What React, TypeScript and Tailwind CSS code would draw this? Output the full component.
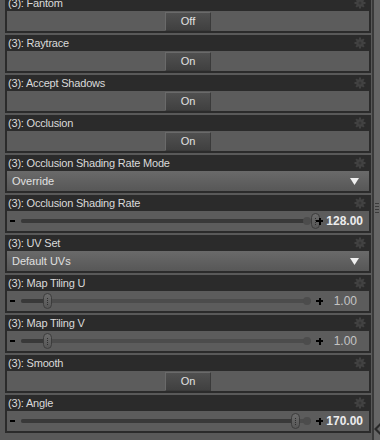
import type { ReactNode } from 'react'

type Item =
  | { label: string; kind: 'toggle'; value: string }
  | { label: string; kind: 'select'; value: string }
  | { label: string; kind: 'slider'; value: string; pos: number; bold?: boolean }

const ITEMS: Item[] = [
  { label: 'Fantom', kind: 'toggle', value: 'Off' },
  { label: 'Raytrace', kind: 'toggle', value: 'On' },
  { label: 'Accept Shadows', kind: 'toggle', value: 'On' },
  { label: 'Occlusion', kind: 'toggle', value: 'On' },
  { label: 'Occlusion Shading Rate Mode', kind: 'select', value: 'Override' },
  { label: 'Occlusion Shading Rate', kind: 'slider', value: '128.00', pos: 102, bold: true },
  { label: 'UV Set', kind: 'select', value: 'Default UVs' },
  { label: 'Map Tiling U', kind: 'slider', value: '1.00', pos: 9 },
  { label: 'Map Tiling V', kind: 'slider', value: '1.00', pos: 9 },
  { label: 'Smooth', kind: 'toggle', value: 'On' },
  { label: 'Angle', kind: 'slider', value: '170.00', pos: 95, bold: true },
]

// 小齿轮（属性菜单）
function Gear() {
  const teeth = [0, 45, 90, 135, 180, 225, 270, 315]
  return (
    <svg width="12" height="12" viewBox="0 0 12 12" className="shrink-0">
      {teeth.map((a) => (
        <rect key={a} x="5" y="0.5" width="2" height="3" fill="#424242" transform={`rotate(${a} 6 6)`} />
      ))}
      <circle cx="6" cy="6" r="3.8" fill="#424242" />
      <circle cx="6" cy="6" r="1.5" fill="#363636" />
    </svg>
  )
}

function Toggle({ value }: { value: string }) {
  return (
    <div className="h-full flex items-center justify-center">
      <div className="w-[46px] h-[19px] flex items-center justify-center bg-gradient-to-b from-[#505050] to-[#404040] border border-[#6a6a6a] border-b-[#3a3a3a] border-r-[#3a3a3a] text-[11px] text-[#e2e2e2]">
        {value}
      </div>
    </div>
  )
}

function Select({ value }: { value: string }) {
  return (
    <div className="h-full flex items-center justify-between pl-[5px] pr-[10px] bg-gradient-to-b from-[#6a6a6a] to-[#575757] text-[11px] text-[#e0e0e0]">
      <span>{value}</span>
      <svg width="9" height="7" viewBox="0 0 9 7"><path d="M0 0h9L4.5 7z" fill="#f0f0f0" /></svg>
    </div>
  )
}

function Slider({ value, pos, bold }: { value: string; pos: number; bold?: boolean }) {
  return (
    <div className="h-full flex items-center pl-[3px]">
      <div className="w-[5px] h-[2px] bg-black mr-[6px]" />
      <div className="relative flex-1 h-[4px] mr-[7px]">
        <div className="absolute inset-0 rounded-full bg-[#4c4c4c]" />
        <div className="absolute left-0 top-0 h-full rounded-full bg-[#393939]" style={{ width: `${Math.min(pos, 100)}%` }} />
        <div className="absolute right-[-2px] top-[-2px] w-[8px] h-[8px] rounded-full bg-[#4c4c4c]" />
        <div
          className="absolute top-[-6px] w-[9px] h-[16px] -ml-[4px] rounded-full bg-gradient-to-b from-[#6c6c6c] to-[#565656] border border-[#3c3c3c] flex items-center justify-center"
          style={{ left: `${pos}%` }}
        >
          <div className="w-[1px] h-[7px] border-l border-dotted border-[#2e2e2e]" />
        </div>
      </div>
      <div className="relative w-[7px] h-[7px] shrink-0">
        <div className="absolute left-0 top-[2.5px] w-[7px] h-[2px] bg-black" />
        <div className="absolute left-[2.5px] top-0 w-[2px] h-[7px] bg-black" />
      </div>
      <span className={bold ? 'w-[46px] pr-[6px] text-right text-[12px] font-bold text-[#ececec]' : 'w-[46px] pr-[12px] text-right text-[12px] text-[#c4c4c4]'}>
        {value}
      </span>
    </div>
  )
}

function Row({ label, children }: { label: string; children: ReactNode }) {
  return (
    <div className="bg-[#2b2b2b] px-[2px] pb-[2px] mb-[2px]">
      <div className="h-[16px] flex items-center justify-between pl-[1px] pr-[3px]">
        <span className="text-[11px] tracking-[-0.2px] text-[#dadada] leading-none">(3): {label}</span>
        <Gear />
      </div>
      <div className="h-[20px] bg-[#5c5c5c]">{children}</div>
    </div>
  )
}

export default function App() {
  return (
    <div className="w-[380px] h-[440px] overflow-hidden bg-[#595959] flex" style={{ fontFamily: '"Liberation Sans", Arial, sans-serif' }}>
      <div className="w-[5px] shrink-0" />
      <div className="flex-1 -mt-[5px]">
        {ITEMS.map((it) => (
          <Row key={it.label} label={it.label}>
            {it.kind === 'toggle' && <Toggle value={it.value} />}
            {it.kind === 'select' && <Select value={it.value} />}
            {it.kind === 'slider' && <Slider value={it.value} pos={it.pos} bold={it.bold} />}
          </Row>
        ))}
      </div>
      {/* 右侧滚动条 */}
      <div className="w-[8px] shrink-0 ml-[1px] border-l-2 border-[#3a3a3a] bg-[#666] flex flex-col items-center">
        <div className="h-[203px]" />
        <div className="flex flex-col gap-[2px]">
          <div className="w-[4px] h-[1px] bg-[#3a3a3a]" />
          <div className="w-[4px] h-[1px] bg-[#3a3a3a]" />
          <div className="w-[4px] h-[1px] bg-[#3a3a3a]" />
          <div className="w-[4px] h-[1px] bg-[#3a3a3a]" />
        </div>
        <div className="flex-1" />
        <svg width="6" height="14" viewBox="0 0 6 14" className="mb-[3px]">
          <path d="M0 6L6 0V3L3 6L6 9V12Z" fill="#2a2a2a" />
        </svg>
      </div>
    </div>
  )
}
